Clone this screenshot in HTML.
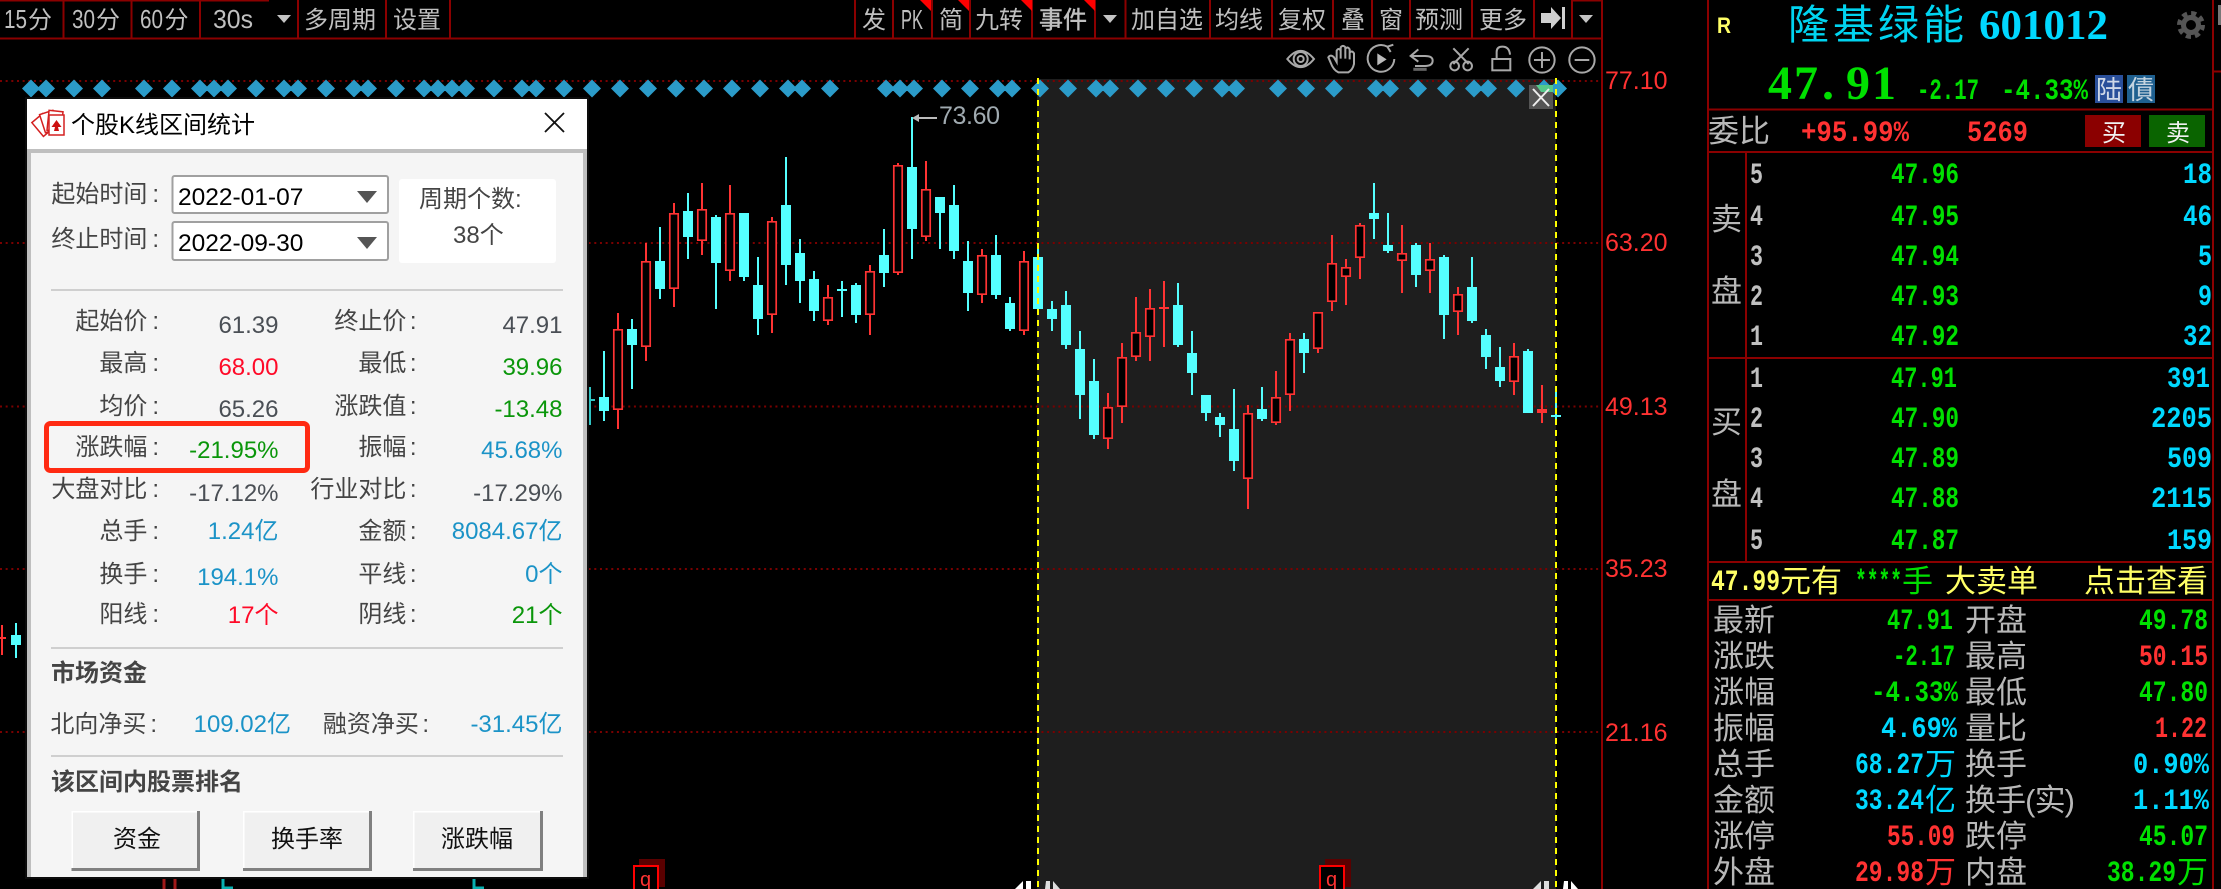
<!DOCTYPE html>
<html lang="zh-CN">
<head>
<meta charset="utf-8">
<title>个股K线区间统计</title>
<style>
html,body{margin:0;padding:0;background:#000;width:2221px;height:889px;overflow:hidden}
svg{display:block;position:absolute;left:0;top:0}
text{font-family:"Liberation Sans","Noto Sans CJK SC",sans-serif;white-space:pre}
.t{font-size:24px;fill:#c0c0c0}
.d{font-size:26px;fill:#c0c0c0}
.a{font-size:25px;fill:#ff3232}
.l{font-size:24px;fill:#444;text-anchor:end}
.v{font-size:24px;text-anchor:end}
.k{fill:#4a4f55}.b{fill:#1b93c7}.g{fill:#0a960a}.r{fill:#ff0a28}
.h{font-size:24px;font-weight:bold;fill:#444}
.c{font-size:24px;fill:#111;text-anchor:middle}
.z{font-size:31px;fill:#b8b8b8}
.m{font-family:"Liberation Mono","Liberation Sans",monospace;font-size:30px;font-weight:bold}
.G{fill:#00e000}.R{fill:#ff3232}.C{fill:#00d8ff}.W{fill:#c0c0c0}.Y{fill:#ffff66}
</style>
</head>
<body>
<svg width="2221" height="889" viewBox="0 0 2221 889" xmlns="http://www.w3.org/2000/svg">
<rect width="2221" height="889" fill="#000"/>
<rect x="1037" y="79" width="519" height="810" fill="#1e1e1e"/>

<!-- grid -->
<path d="M0 81H1600M0 243H1600M0 406.500H1600M0 569H1600M0 732H1600" stroke="#7a0000" stroke-width="2" stroke-dasharray="2 3.66" fill="none"/>

<!-- toolbar -->
<path d="M0 38.500H1602M0 .5H269M1572 .5H1602M63.500 0V38M131.500 0V38M200 0V38M298 0V38M386 0V38M450 0V38M855 0V38M893 0V38M932 0V38M970 0V38M1032 0V38M1095 0V38M1125.500 0V38M1210 0V38M1272 0V38M1333 0V38M1372 0V38M1410 0V38M1472 0V38M1534 0V38M1572 0V38" stroke="#8b0000" stroke-width="2" fill="none"/>
<path d="M1602 0V889" stroke="#8b0000" stroke-width="2"/>
<path d="M920 0h11v11zM958 0h11v11zM1021 0h11v11zM1084 0h11v11z" fill="#ff0000"/>
<text class="d" x="4" y="28" textLength="23" lengthAdjust="spacingAndGlyphs">15</text><text class="t" x="28" y="28">分</text>
<text class="d" x="72" y="28" textLength="23" lengthAdjust="spacingAndGlyphs">30</text><text class="t" x="96" y="28">分</text>
<text class="d" x="140" y="28" textLength="23" lengthAdjust="spacingAndGlyphs">60</text><text class="t" x="164.500" y="28">分</text>
<text class="d" x="213" y="28" textLength="40" lengthAdjust="spacingAndGlyphs">30s</text>
<path d="M277 15h14l-7 8zM1103 15h14l-7 8zM1579 15h14l-7 8z" fill="#c4c4c4"/>
<text class="t" x="304" y="28">多周期</text>
<text class="t" x="393" y="28">设置</text>
<text class="t" x="862" y="28">发</text>
<text x="901" y="29" font-size="28" fill="#c0c0c0" textLength="22" lengthAdjust="spacingAndGlyphs">PK</text>
<text class="t" x="939" y="28">简</text>
<text class="t" x="975" y="28">九转</text>
<text class="t" x="1039" y="28" stroke="#c0c0c0" stroke-width=".5">事件</text>
<text class="t" x="1131" y="28">加自选</text>
<text class="t" x="1215" y="28">均线</text>
<text class="t" x="1278" y="28">复权</text>
<text class="t" x="1341" y="28">叠</text>
<text class="t" x="1379" y="28">窗</text>
<text class="t" x="1415" y="28">预测</text>
<text class="t" x="1479" y="28">更多</text>
<path d="M1541 13h10V7l10 11-10 11v-6h-10zM1562 7h3v22h-3z" fill="#cfcfcf"/>

<!-- tool icons -->
<g transform="translate(1280 40) scale(.3333)" fill="none" stroke="#a8a8a8" stroke-width="6">
<path d="M22 57Q62 8 102 57Q62 106 22 57z"/><circle cx="62" cy="57" r="21"/><circle cx="62" cy="57" r="9"/>
<path d="M190 97H175Q160 90 152 68L145 52Q152 42 162 52L170 66V32Q176 22 182 32V56V22Q189 13 196 22V56V26Q203 18 209 28V58V38Q216 30 222 40V72Q218 90 205 97Z"/>
<path d="M322 20A40 40 0 1 0 343 57M322 20L340 14M322 20L332 36"/>
<path d="M292 40L320 58L292 76Z" fill="#bbb" stroke="none"/>
<path d="M415 28L392 48L415 65M392 48H435Q458 48 458 62Q458 78 435 78H405"/>
<path d="M400 88H440" stroke="#666" stroke-width="9"/>
<path d="M520 25L566 72M566 25L520 72"/><circle cx="524" cy="78" r="13"/><circle cx="563" cy="78" r="13"/>
<rect x="637" y="57" width="54" height="34"/><path d="M650 55V36Q650 20 667 20Q688 20 690 44"/>
<circle cx="786" cy="60" r="38"/><path d="M762 60H810M786 36V84"/>
<circle cx="906" cy="60" r="38"/><path d="M884 60H928"/>
</g>

<!-- candles -->
<path stroke="#55ffff" stroke-width="2" fill="none" d="M16 623V658M604 351V421M632 319V389M660 227V299M688 193V259M716 215V309M744 213V281M758 257V335M786 157V285M800 239V303M814 271V321M842 281V317M856 283V323M884 229V287M912 117V259M940 197V249M954 185V259M968 241V311M996 235V299M1010 297V331M1038 245V315M1052 301V331M1066 291V349M1080 331V419M1094 359V439M1178 283V347M1192 331V395M1206 395V421M1220 413V437M1234 389V471M1262 387V421M1304 333V373M1374 183V239M1388 213V253M1416 243V287M1444 255V339M1472 257V323M1486 329V369M1500 347V387M1528 349V413M1556 389V420"/>
<path fill="#55ffff" d="M11 635h10V645h-10zM599 397h10V411h-10zM627 329h10V345h-10zM655 261h10V289h-10zM683 211h10V237h-10zM711 217h10V263h-10zM739 213h10V277h-10zM753 285h10V319h-10zM781 205h10V265h-10zM795 253h10V281h-10zM809 279h10V311h-10zM837 289h10V291h-10zM851 285h10V315h-10zM879 255h10V273h-10zM907 167h10V229h-10zM935 197h10V213h-10zM949 205h10V251h-10zM963 261h10V293h-10zM991 255h10V295h-10zM1005 303h10V329h-10zM1033 257h10V309h-10zM1047 309h10V319h-10zM1061 305h10V345h-10zM1075 349h10V395h-10zM1089 381h10V435h-10zM1173 305h10V345h-10zM1187 353h10V373h-10zM1201 395h10V413h-10zM1215 417h10V425h-10zM1229 429h10V461h-10zM1257 409h10V419h-10zM1299 339h10V353h-10zM1369 213h10V219h-10zM1383 245h10V251h-10zM1411 245h10V275h-10zM1439 257h10V315h-10zM1467 287h10V321h-10zM1481 335h10V357h-10zM1495 367h10V381h-10zM1523 351h10V413h-10zM1551 415h10V417h-10z"/>
<path stroke="#30c4c4" stroke-width="2" fill="none" d="M590 387V425"/><path fill="#30c4c4" d="M587 399h8v2h-8z"/>
<path stroke="#ff3333" stroke-width="2" fill="none" d="M2 625V655M0 638H6M618 313V429M646 243V361M674 203V307M702 183V255M730 185V281M772 217V333M828 285V325M870 265V335M898 163V275M926 161V241M982 249V303M1024 251V335M1108 393V449M1122 343V423M1136 297V361M1150 289V361M1164 281V347M1248 405V509M1276 371V425M1290 333V411M1318 312V353M1332 235V311M1346 259V305M1360 223V279M1402 225V293M1430 243V293M1458 287V335M1514 343V395M1542 385V423"/>
<path fill="#000" stroke="#ff3333" stroke-width="1.700" d="M613.800 329.800h8.400V409.200h-8.400zM641.800 261.800h8.400V346.200h-8.400zM669.800 213.800h8.400V288.200h-8.400zM697.800 209.800h8.400V240.200h-8.400zM725.800 213.800h8.400V270.200h-8.400zM767.800 221.800h8.400V314.200h-8.400zM823.800 297.800h8.400V320.200h-8.400zM865.800 271.800h8.400V314.200h-8.400zM893.800 165.800h8.400V272.200h-8.400zM921.800 189.800h8.400V236.200h-8.400zM977.800 255.800h8.400V294.200h-8.400zM1019.800 261.800h8.400V330.200h-8.400zM1103.800 407.800h8.400V438.200h-8.400zM1117.800 357.800h8.400V406.200h-8.400zM1131.800 332.800h8.400V356.200h-8.400zM1145.800 308.800h8.400V336.200h-8.400zM1243.800 413.800h8.400V478.200h-8.400zM1271.800 397.800h8.400V422.200h-8.400zM1285.800 339.800h8.400V394.200h-8.400zM1313.800 312.800h8.400V348.200h-8.400zM1327.800 263.800h8.400V301.200h-8.400zM1341.800 267.800h8.400V276.200h-8.400zM1355.800 225.800h8.400V257.200h-8.400zM1397.800 253.800h8.400V260.200h-8.400zM1425.800 259.800h8.400V270.200h-8.400zM1453.800 294.800h8.400V311.200h-8.400zM1509.800 356.800h8.400V381.200h-8.400z"/>
<path fill="#ff3333" d="M1159 307h10v2h-10zM1537 409h10v4h-10z"/>

<!-- high label -->
<path d="M919 118H937" stroke="#bbb" stroke-width="2"/><path d="M912 118l7-4v8z" fill="#bbb"/>
<text x="939" y="124" font-size="25" fill="#a0aab0" textLength="61">73.60</text>

<!-- range lines -->
<path d="M1038 78V889M1556 78V889" stroke="#ffff00" stroke-width="2" stroke-dasharray="6 5" fill="none"/>

<!-- diamonds -->
<path fill="#2b9bc9" d="M31 79.500l9 9-9 9-9-9zM46 79.500l9 9-9 9-9-9zM74 79.500l9 9-9 9-9-9zM102 79.500l9 9-9 9-9-9zM144 79.500l9 9-9 9-9-9zM172 79.500l9 9-9 9-9-9zM200 79.500l9 9-9 9-9-9zM214 79.500l9 9-9 9-9-9zM228 79.500l9 9-9 9-9-9zM256 79.500l9 9-9 9-9-9zM284 79.500l9 9-9 9-9-9zM298 79.500l9 9-9 9-9-9zM326 79.500l9 9-9 9-9-9zM354 79.500l9 9-9 9-9-9zM368 79.500l9 9-9 9-9-9zM396 79.500l9 9-9 9-9-9zM424 79.500l9 9-9 9-9-9zM438 79.500l9 9-9 9-9-9zM452 79.500l9 9-9 9-9-9zM466 79.500l9 9-9 9-9-9zM494 79.500l9 9-9 9-9-9zM522 79.500l9 9-9 9-9-9zM536 79.500l9 9-9 9-9-9zM564 79.500l9 9-9 9-9-9zM592 79.500l9 9-9 9-9-9zM620 79.500l9 9-9 9-9-9zM648 79.500l9 9-9 9-9-9zM676 79.500l9 9-9 9-9-9zM704 79.500l9 9-9 9-9-9zM732 79.500l9 9-9 9-9-9zM760 79.500l9 9-9 9-9-9zM788 79.500l9 9-9 9-9-9zM802 79.500l9 9-9 9-9-9zM830 79.500l9 9-9 9-9-9zM886 79.500l9 9-9 9-9-9zM900 79.500l9 9-9 9-9-9zM914 79.500l9 9-9 9-9-9zM942 79.500l9 9-9 9-9-9zM970 79.500l9 9-9 9-9-9zM998 79.500l9 9-9 9-9-9zM1012 79.500l9 9-9 9-9-9zM1040 79.500l9 9-9 9-9-9zM1068 79.500l9 9-9 9-9-9zM1096 79.500l9 9-9 9-9-9zM1110 79.500l9 9-9 9-9-9zM1138 79.500l9 9-9 9-9-9zM1166 79.500l9 9-9 9-9-9zM1194 79.500l9 9-9 9-9-9zM1222 79.500l9 9-9 9-9-9zM1236 79.500l9 9-9 9-9-9zM1278 79.500l9 9-9 9-9-9zM1306 79.500l9 9-9 9-9-9zM1334 79.500l9 9-9 9-9-9zM1376 79.500l9 9-9 9-9-9zM1390 79.500l9 9-9 9-9-9zM1418 79.500l9 9-9 9-9-9zM1446 79.500l9 9-9 9-9-9zM1474 79.500l9 9-9 9-9-9zM1488 79.500l9 9-9 9-9-9zM1516 79.500l9 9-9 9-9-9zM1544 79.500l9 9-9 9-9-9zM1558 79.500l9 9-9 9-9-9z"/>
<path d="M1037 78h2v6h-2zM1555 78h2v6h-2zM1555 89h2v6h-2zM1037 89h2v6h-2zM1555 100h2v6h-2z" fill="#ffff00"/>

<!-- selection close -->
<rect x="1529" y="85" width="24" height="24" fill="#555"/>
<path d="M1536 85h17v7h-12z" fill="#55c88a"/>
<path d="M1533 89L1549 106M1549 89L1533 106" stroke="#eee" stroke-width="2"/>

<!-- axis -->
<text class="a" x="1605" y="89">77.10</text>
<text class="a" x="1605" y="251">63.20</text>
<text class="a" x="1605" y="415">49.13</text>
<text class="a" x="1605" y="577">35.23</text>
<text class="a" x="1605" y="741">21.16</text>

<!-- bottom markers -->
<rect x="639" y="859" width="26" height="28" fill="#5a0000"/>
<rect x="634" y="866" width="24" height="24" fill="#000" stroke="#f00" stroke-width="2"/>
<rect x="1325" y="859" width="26" height="28" fill="#5a0000"/>
<rect x="1320" y="866" width="24" height="24" fill="#000" stroke="#f00" stroke-width="2"/>
<text x="640" y="886" font-size="20" fill="#ff3232" textLength="13">q</text>
<text x="1326" y="886" font-size="20" fill="#ff3232" textLength="13">q</text>
<path d="M1015 889l5-5 3-3v8zM1026 881h5v8h-5z" fill="#fff"/>
<path d="M1046 881h4v8h-5zM1053 881l7 8h-7z" fill="#ddd"/>
<path d="M1533 889l5-5 3-3v8zM1544 881h5v8h-5z" fill="#ddd"/>
<path d="M1564 881h4v8h-5zM1571 881l7 8h-7z" fill="#fff"/>
<path d="M164 878V889M175 878V889" stroke="#a01818" stroke-width="3"/>
<path d="M223 878V888H233" stroke="#08b0b0" stroke-width="3" fill="none"/>
<path d="M474 878V888H484" stroke="#08b0b0" stroke-width="3" fill="none"/>

<!-- dialog -->
<rect x="25" y="97" width="564" height="782" fill="#0c0c0c"/>
<rect x="27" y="99" width="560" height="778" fill="#bfbfbf"/>
<rect x="27" y="99" width="560" height="50" fill="#fff"/>
<rect x="31" y="153" width="552" height="724" fill="#f5f5f5"/>
<g fill="#fff" stroke="#d42020" stroke-width="1.500">
<rect x="36" y="116" width="14" height="18" transform="rotate(-40 43 125)"/>
<rect x="42" y="112" width="14" height="19" transform="rotate(-18 49 121)"/>
<rect x="48" y="111" width="14" height="20" transform="rotate(6 55 121)"/>
<rect x="49" y="115" width="15" height="20"/>
</g>
<path d="M56.500 120l5 7h-3.500l1 4h-5l1-4h-3.500z" fill="#cc1010"/>
<text x="71" y="133" font-size="24" fill="#000">个股K线区间统计</text>
<path d="M545 113L564 132M564 113L545 132" stroke="#111" stroke-width="1.800"/>

<text class="l" x="159" y="202">起始时间<tspan dx="5">:</tspan></text>
<text class="l" x="159" y="247">终止时间<tspan dx="5">:</tspan></text>
<rect x="172.500" y="176" width="215.500" height="37" rx="2" fill="#fff" stroke="#a0a0a0" stroke-width="2"/>
<rect x="172.500" y="222" width="215.500" height="38" rx="2" fill="#fff" stroke="#a0a0a0" stroke-width="2"/>
<text x="178" y="205" font-size="24.500" fill="#000">2022-01-07</text>
<text x="178" y="251" font-size="24.500" fill="#000">2022-09-30</text>
<path d="M357 191h20l-10 12z" fill="#555"/>
<path d="M357 237h20l-10 12z" fill="#555"/>
<rect x="399" y="179" width="157" height="84" rx="3" fill="#fff"/>
<text x="419" y="207" font-size="24" fill="#444">周期个数:</text>
<text x="453" y="243" font-size="24" fill="#444">38个</text>

<path d="M51 290H563M51 648H563M51 756H563" stroke="#cfcfcf" stroke-width="2"/>

<text class="l" x="159" y="329">起始价<tspan dx="5">:</tspan></text><text class="v k" x="278.500" y="333">61.39</text>
<text class="l" x="416.500" y="329">终止价<tspan dx="3.500">:</tspan></text><text class="v k" x="562.500" y="333">47.91</text>
<text class="l" x="159" y="371">最高<tspan dx="5">:</tspan></text><text class="v r" x="278.500" y="375">68.00</text>
<text class="l" x="416.500" y="371">最低<tspan dx="3.500">:</tspan></text><text class="v g" x="562.500" y="375">39.96</text>
<text class="l" x="159" y="414">均价<tspan dx="5">:</tspan></text><text class="v k" x="278.500" y="417">65.26</text>
<text class="l" x="416.500" y="414">涨跌值<tspan dx="3.500">:</tspan></text><text class="v g" x="562.500" y="417">-13.48</text>
<text class="l" x="159" y="455">涨跌幅<tspan dx="5">:</tspan></text><text class="v g" x="278.500" y="458">-21.95%</text>
<text class="l" x="416.500" y="455">振幅<tspan dx="3.500">:</tspan></text><text class="v b" x="562.500" y="458">45.68%</text>
<text class="l" x="159" y="497">大盘对比<tspan dx="5">:</tspan></text><text class="v k" x="278.500" y="501">-17.12%</text>
<text class="l" x="416.500" y="497">行业对比<tspan dx="3.500">:</tspan></text><text class="v k" x="562.500" y="501">-17.29%</text>
<text class="l" x="159" y="539">总手<tspan dx="5">:</tspan></text><text class="v b" x="278.500" y="539">1.24亿</text>
<text class="l" x="416.500" y="539">金额<tspan dx="3.500">:</tspan></text><text class="v b" x="562.500" y="539">8084.67亿</text>
<text class="l" x="159" y="582">换手<tspan dx="5">:</tspan></text><text class="v b" x="278.500" y="585">194.1%</text>
<text class="l" x="416.500" y="582">平线<tspan dx="3.500">:</tspan></text><text class="v b" x="562.500" y="582">0个</text>
<text class="l" x="159" y="622">阳线<tspan dx="5">:</tspan></text><text class="v r" x="278.500" y="623">17个</text>
<text class="l" x="416.500" y="622">阴线<tspan dx="3.500">:</tspan></text><text class="v g" x="562.500" y="623">21个</text>

<rect x="46.500" y="423.500" width="261" height="47" rx="4" fill="none" stroke="#ff2a12" stroke-width="5"/>

<text class="h" x="51" y="681">市场资金</text>
<text class="l" x="157" y="732">北向净买<tspan dx="4">:</tspan></text><text class="v b" x="291" y="732">109.02亿</text>
<text class="l" x="429" y="732">融资净买<tspan dx="3.500">:</tspan></text><text class="v b" x="562.500" y="732">-31.45亿</text>
<text class="h" x="51" y="790">该区间内股票排名</text>

<rect x="71.500" y="811" width="128.500" height="60" fill="#808080"/><rect x="71.500" y="811" width="125.500" height="57" fill="#fff"/><rect x="73" y="812.500" width="124" height="55.500" fill="#f0f0f0"/>
<rect x="243" y="811" width="129" height="60" fill="#808080"/><rect x="243" y="811" width="126" height="57" fill="#fff"/><rect x="244.500" y="812.500" width="124.500" height="55.500" fill="#f0f0f0"/>
<rect x="413" y="811" width="130" height="60" fill="#808080"/><rect x="413" y="811" width="127" height="57" fill="#fff"/><rect x="414.500" y="812.500" width="125.500" height="55.500" fill="#f0f0f0"/>
<text class="c" x="137" y="847">资金</text>
<text class="c" x="307" y="847">换手率</text>
<text class="c" x="477" y="847">涨跌幅</text>

<!-- right panel -->
<path d="M1708 0V889M2213 0V889M1708 109.500H2213M1708 152H2213M1746 152V562M1708 358H2213M1708 562H2213M1708 600H2213M2213 71.500H2221" stroke="#8b0000" stroke-width="2" fill="none"/>
<path d="M2218 5h3v20h-3z" fill="#777"/>
<text x="1717" y="33" font-size="22" font-weight="bold" fill="#ffff66" textLength="14" lengthAdjust="spacingAndGlyphs">R</text>
<text x="1788" y="39" font-size="41" fill="#00d4f0" letter-spacing="4">隆基绿能</text>
<text x="1979" y="39" font-size="42" font-weight="bold" fill="#00d8ff" textLength="129" lengthAdjust="spacingAndGlyphs" style="font-family:'Liberation Serif',serif">601012</text>
<circle cx="2191" cy="25" r="7.500" fill="none" stroke="#555" stroke-width="5"/>
<circle cx="2191" cy="25" r="11.500" fill="none" stroke="#555" stroke-width="5" stroke-dasharray="5 4"/>

<text x="1768 1794 1822 1846 1872" y="99" font-size="48" font-weight="bold" fill="#00e000" style="font-family:'Liberation Serif',serif">47.91</text>
<text class="m G" x="1917" y="99" textLength="62" lengthAdjust="spacingAndGlyphs">-2.17</text>
<text class="m G" x="2001" y="99" textLength="87" lengthAdjust="spacingAndGlyphs">-4.33%</text>
<rect x="2095" y="75" width="28" height="28" fill="#2a4f9a"/>
<rect x="2127" y="75" width="28" height="28" fill="#1f6090"/>
<text x="2096" y="99" font-size="26" fill="#d0d8e8">陆</text>
<text x="2128" y="99" font-size="26" fill="#c4d4e0">債</text>

<text class="z" x="1708" y="142">委比</text>
<text class="m R" x="1801" y="141" textLength="108" lengthAdjust="spacingAndGlyphs">+95.99%</text>
<text class="m R" x="1967" y="141" textLength="61" lengthAdjust="spacingAndGlyphs">5269</text>
<rect x="2085" y="115" width="56" height="32" fill="#8b0000"/>
<rect x="2149" y="115" width="56" height="32" fill="#0a6400"/>
<text x="2102" y="141" font-size="24" fill="#f0f0f0">买</text>
<text x="2166" y="141" font-size="24" fill="#f0f0f0">卖</text>

<text class="z" x="1711" y="230">卖</text>
<text class="z" x="1711" y="302">盘</text>
<text class="z" x="1711" y="433">买</text>
<text class="z" x="1711" y="505">盘</text>

<text class="m W" x="1750" y="183" textLength="13" lengthAdjust="spacingAndGlyphs">5</text><text class="m G" x="1891" y="183" textLength="68" lengthAdjust="spacingAndGlyphs">47.96</text><text class="m C" x="2183" y="183" textLength="29" lengthAdjust="spacingAndGlyphs">18</text>
<text class="m W" x="1750" y="225" textLength="13" lengthAdjust="spacingAndGlyphs">4</text><text class="m G" x="1891" y="225" textLength="68" lengthAdjust="spacingAndGlyphs">47.95</text><text class="m C" x="2183" y="225" textLength="29" lengthAdjust="spacingAndGlyphs">46</text>
<text class="m W" x="1750" y="265" textLength="13" lengthAdjust="spacingAndGlyphs">3</text><text class="m G" x="1891" y="265" textLength="68" lengthAdjust="spacingAndGlyphs">47.94</text><text class="m C" x="2198" y="265" textLength="14" lengthAdjust="spacingAndGlyphs">5</text>
<text class="m W" x="1750" y="305" textLength="13" lengthAdjust="spacingAndGlyphs">2</text><text class="m G" x="1891" y="305" textLength="68" lengthAdjust="spacingAndGlyphs">47.93</text><text class="m C" x="2198" y="305" textLength="14" lengthAdjust="spacingAndGlyphs">9</text>
<text class="m W" x="1750" y="345" textLength="13" lengthAdjust="spacingAndGlyphs">1</text><text class="m G" x="1891" y="345" textLength="68" lengthAdjust="spacingAndGlyphs">47.92</text><text class="m C" x="2183" y="345" textLength="29" lengthAdjust="spacingAndGlyphs">32</text>
<text class="m W" x="1750" y="387" textLength="13" lengthAdjust="spacingAndGlyphs">1</text><text class="m G" x="1891" y="387" textLength="66" lengthAdjust="spacingAndGlyphs">47.91</text><text class="m C" x="2167" y="387" textLength="43" lengthAdjust="spacingAndGlyphs">391</text>
<text class="m W" x="1750" y="427" textLength="13" lengthAdjust="spacingAndGlyphs">2</text><text class="m G" x="1891" y="427" textLength="68" lengthAdjust="spacingAndGlyphs">47.90</text><text class="m C" x="2151" y="427" textLength="61" lengthAdjust="spacingAndGlyphs">2205</text>
<text class="m W" x="1750" y="467" textLength="13" lengthAdjust="spacingAndGlyphs">3</text><text class="m G" x="1891" y="467" textLength="68" lengthAdjust="spacingAndGlyphs">47.89</text><text class="m C" x="2167" y="467" textLength="45" lengthAdjust="spacingAndGlyphs">509</text>
<text class="m W" x="1750" y="507" textLength="13" lengthAdjust="spacingAndGlyphs">4</text><text class="m G" x="1891" y="507" textLength="68" lengthAdjust="spacingAndGlyphs">47.88</text><text class="m C" x="2151" y="507" textLength="61" lengthAdjust="spacingAndGlyphs">2115</text>
<text class="m W" x="1750" y="549" textLength="13" lengthAdjust="spacingAndGlyphs">5</text><text class="m G" x="1891" y="549" textLength="68" lengthAdjust="spacingAndGlyphs">47.87</text><text class="m C" x="2167" y="549" textLength="45" lengthAdjust="spacingAndGlyphs">159</text>

<text class="m Y" x="1711" y="590" textLength="69" lengthAdjust="spacingAndGlyphs">47.99</text>
<text class="z Y" x="1780" y="592">元有</text>
<text class="m G" x="1855" y="590" textLength="47" lengthAdjust="spacingAndGlyphs">****</text>
<text class="z G" x="1902" y="592">手</text>
<text class="z Y" x="1945" y="592">大卖单</text>
<text class="z Y" x="2084" y="592">点击查看</text>

<text class="z" x="1713" y="631">最新</text><text class="m G" x="1887" y="629" textLength="66" lengthAdjust="spacingAndGlyphs">47.91</text>
<text class="z" x="1965" y="631">开盘</text><text class="m G" x="2139" y="629" textLength="69" lengthAdjust="spacingAndGlyphs">49.78</text>
<text class="z" x="1713" y="667">涨跌</text><text class="m G" x="1893" y="665" textLength="62" lengthAdjust="spacingAndGlyphs">-2.17</text>
<text class="z" x="1965" y="667">最高</text><text class="m R" x="2139" y="665" textLength="69" lengthAdjust="spacingAndGlyphs">50.15</text>
<text class="z" x="1713" y="703">涨幅</text><text class="m G" x="1871" y="701" textLength="87" lengthAdjust="spacingAndGlyphs">-4.33%</text>
<text class="z" x="1965" y="703">最低</text><text class="m G" x="2139" y="701" textLength="69" lengthAdjust="spacingAndGlyphs">47.80</text>
<text class="z" x="1713" y="739">振幅</text><text class="m C" x="1881" y="737" textLength="76" lengthAdjust="spacingAndGlyphs">4.69%</text>
<text class="z" x="1965" y="739">量比</text><text class="m R" x="2155" y="737" textLength="52" lengthAdjust="spacingAndGlyphs">1.22</text>
<text class="z" x="1713" y="775">总手</text><text class="m C" x="1855" y="773" textLength="69" lengthAdjust="spacingAndGlyphs">68.27</text><text class="z C" x="1925" y="775">万</text>
<text class="z" x="1965" y="775">换手</text><text class="m C" x="2133" y="773" textLength="76" lengthAdjust="spacingAndGlyphs">0.90%</text>
<text class="z" x="1713" y="811">金额</text><text class="m C" x="1855" y="809" textLength="69" lengthAdjust="spacingAndGlyphs">33.24</text><text class="z C" x="1925" y="811">亿</text>
<text class="z" x="1965" y="811" textLength="110">换手(实)</text><text class="m C" x="2133" y="809" textLength="76" lengthAdjust="spacingAndGlyphs">1.11%</text>
<text class="z" x="1713" y="847">涨停</text><text class="m R" x="1887" y="845" textLength="68" lengthAdjust="spacingAndGlyphs">55.09</text>
<text class="z" x="1965" y="847">跌停</text><text class="m G" x="2139" y="845" textLength="69" lengthAdjust="spacingAndGlyphs">45.07</text>
<text class="z" x="1713" y="883">外盘</text><text class="m R" x="1855" y="881" textLength="69" lengthAdjust="spacingAndGlyphs">29.98</text><text class="z R" x="1925" y="883">万</text>
<text class="z" x="1965" y="883">内盘</text><text class="m G" x="2107" y="881" textLength="69" lengthAdjust="spacingAndGlyphs">38.29</text><text class="z G" x="2177" y="883">万</text>
</svg>
</body>
</html>
